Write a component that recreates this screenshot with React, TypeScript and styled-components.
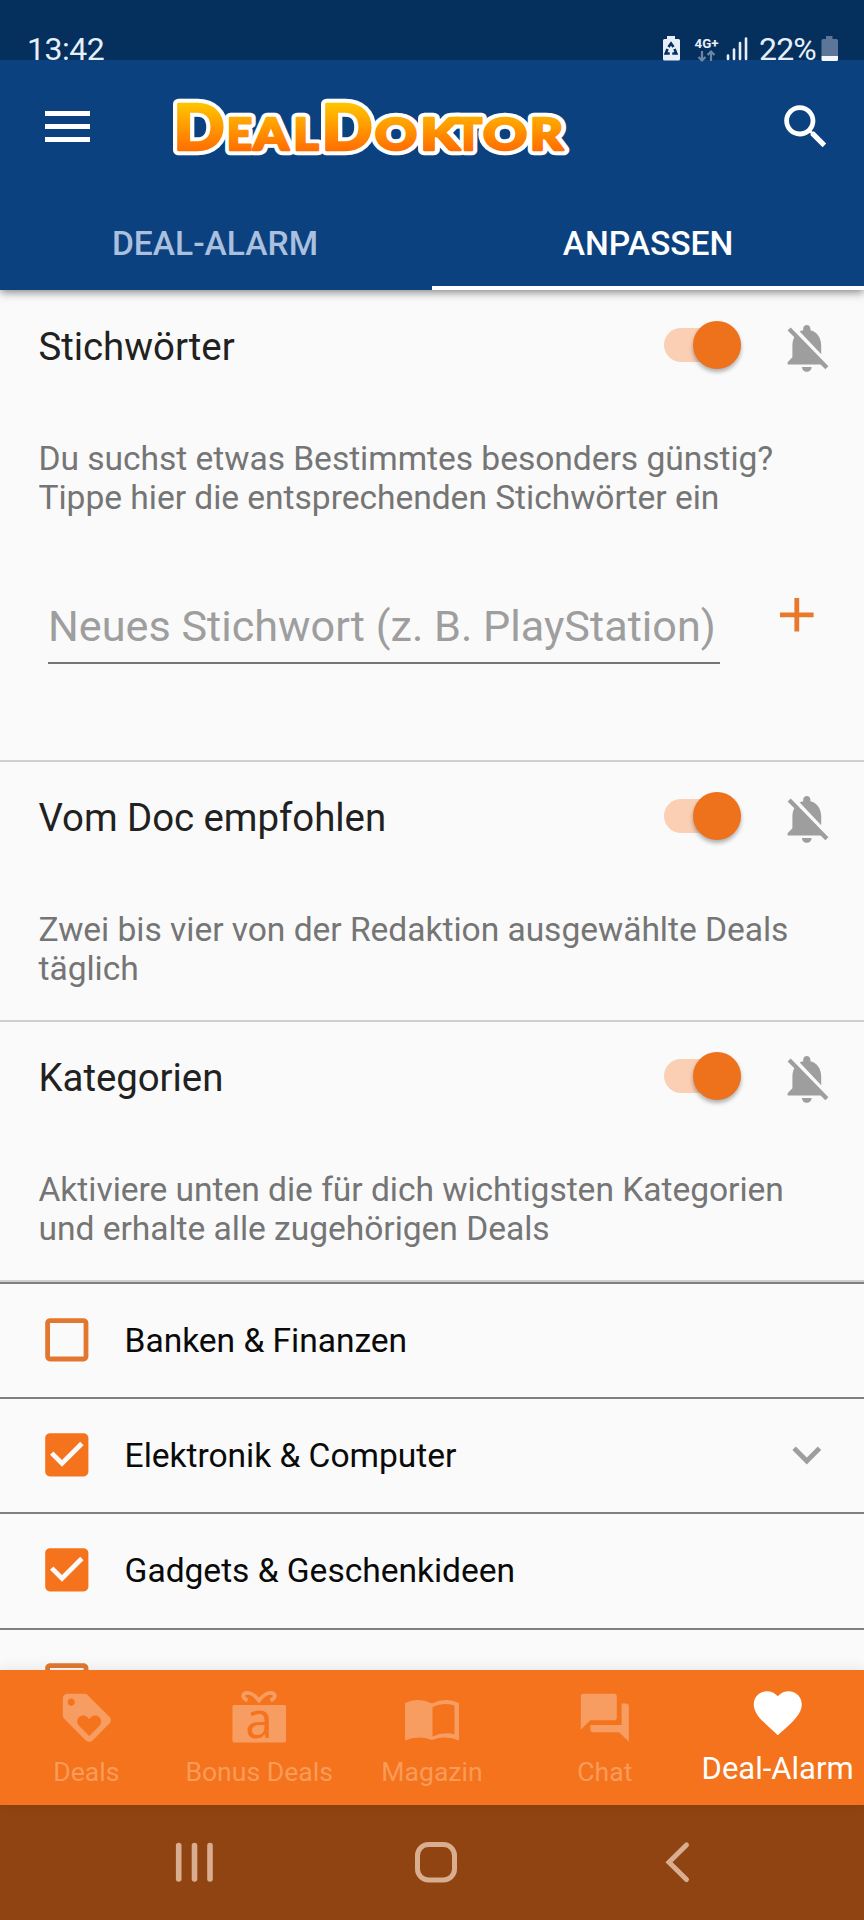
import React from "react";
import styled, { createGlobalStyle } from "styled-components";

const GlobalStyle = createGlobalStyle`
  body { margin: 0; background: #fafafa; }
  * { box-sizing: border-box; }
`;

const Screen = styled.div`
  width: 864px;
  height: 1920px;
  display: flex;
  flex-direction: column;
  overflow: hidden;
  background: #fafafa;
  font-family: Roboto, "Liberation Sans", sans-serif;
`;

const StatusBar = styled.div`
  height: 60px;
  flex: none;
  display: flex;
  align-items: flex-start;
  padding: 31px 26px 0 27px;
  background: #052f5d;
  color: #e6eff9;
  font-size: 32px;
  line-height: 37px;
  z-index: 3;
`;
const Clock = styled.span`
  flex: 1;
  letter-spacing: -0.5px;
`;
const StatusIcons = styled.svg`
  flex: none;
  display: block;
  overflow: visible;
  margin-top: 3px;
`;
const Percent = styled.span`
  margin-left: 9px;
  margin-right: 5px;
  letter-spacing: -0.8px;
`;

const Header = styled.header`
  flex: none;
  height: 230px;
  display: flex;
  flex-direction: column;
  background: #0c417f;
  box-shadow: 0 2px 9px rgba(0, 0, 0, 0.5);
  z-index: 2;
`;
const TitleBar = styled.div`
  height: 133px;
  display: flex;
  align-items: center;
  padding: 0 29px 0 45px;
`;
const MenuButton = styled.div`
  width: 45px;
  height: 31px;
  display: flex;
  flex-direction: column;
  justify-content: space-between;
  span { height: 5px; background: #fff; }
`;
const Logo = styled.svg`
  display: block;
  margin-left: 69px;
  margin-right: auto;
  margin-bottom: 1px;
`;
const Tabs = styled.div`
  flex: 1;
  display: flex;
`;
const Tab = styled.div<{ $active?: boolean }>`
  width: 50%;
  text-align: center;
  padding-top: 31px;
  padding-right: ${(p) => (p.$active ? 0 : 2)}px;
  font-size: 33.6px;
  line-height: 40px;
  font-weight: 500;
  color: ${(p) => (p.$active ? "#fff" : "#aac0de")};
  border-bottom: ${(p) => (p.$active ? "4px solid #fff" : "0")};
`;

const Content = styled.main`
  flex: 1;
  min-height: 0;
  overflow: hidden;
  padding-top: 1px;
`;
const Section = styled.section<{ $height: number }>`
  height: ${(p) => p.$height}px;
  border-bottom: 2.5px solid #cfcfcf;
  padding: 26px 28px 0 38.5px;
`;
const SectionHead = styled.div`
  display: flex;
  align-items: center;
  height: 58px;
`;
const SectionTitle = styled.h2`
  flex: 1;
  margin: 0;
  padding-top: 2px;
  font-size: 38.4px;
  line-height: 46px;
  font-weight: 400;
  letter-spacing: -0.04px;
  color: #212121;
`;
const Switch = styled.div`
  width: 77px;
  height: 34px;
  border-radius: 17px;
  background: #facfb4;
  display: flex;
  align-items: center;
  justify-content: flex-end;
  margin: 0 37.5px 2px 0;
`;
const Thumb = styled.div`
  flex: none;
  width: 48px;
  height: 48px;
  border-radius: 50%;
  background: #ee711c;
  box-shadow: 0 3px 4px rgba(0, 0, 0, 0.3);
`;
const BellSlot = styled.div`
  padding-top: 4px;
`;
const Description = styled.p`
  margin: 64px 0 0;
  font-size: 33.6px;
  line-height: 39.3px;
  letter-spacing: -0.04px;
  color: #757575;
  white-space: pre-line;
`;
const InputRow = styled.div`
  display: flex;
  align-items: flex-start;
  margin-top: 68px;
`;
const KeywordField = styled.div`
  width: 672px;
  height: 72px;
  margin: 6px 48px 0 9.5px;
  border-bottom: 2.5px solid #757575;
  font-size: 43.2px;
  line-height: 50px;
  padding-top: 10px;
  color: #9e9e9e;
  white-space: nowrap;
`;
const Glyph = styled.svg`
  display: block;
  flex: none;
`;

const CategoryList = styled.div`
  border-top: 2.5px solid #808080;
`;
const CategoryRow = styled.div`
  height: 115.2px;
  display: flex;
  align-items: center;
  padding: 0 28.5px 2px 38px;
  border-bottom: 2.5px solid #808080;
`;
const CategoryName = styled.span`
  flex: 1;
  margin-left: 29px;
  padding-top: 2px;
  font-size: 33.6px;
  line-height: 40px;
  letter-spacing: -0.04px;
  color: #0a0a0a;
`;

const BottomNav = styled.nav`
  flex: none;
  height: 135px;
  display: flex;
  background: #f4731c;
  box-shadow: 0 -2px 14px rgba(0, 0, 0, 0.08);
  z-index: 2;
`;
const NavItem = styled.div<{ $active?: boolean }>`
  flex: 1;
  display: flex;
  flex-direction: column;
  align-items: center;
  padding-top: ${(p) => (p.$active ? 14 : 19)}px;
  color: ${(p) => (p.$active ? "#fff" : "#f89d62")};
`;
const NavLabel = styled.span<{ $active?: boolean }>`
  font-size: ${(p) => (p.$active ? 31 : 26.6)}px;
  line-height: 36px;
  margin-top: ${(p) => (p.$active ? 9 : 7)}px;
  white-space: nowrap;
  color: ${(p) => (p.$active ? "#fff" : "#f99b59")};
`;
const SystemNav = styled.div`
  flex: none;
  height: 115px;
  display: flex;
  align-items: center;
  background: #8f4411;
`;

const PATHS = {
  search:
    "M15.5 14h-.79l-.28-.27C15.41 12.59 16 11.11 16 9.5 16 5.91 13.09 3 9.5 3S3 5.91 3 9.5 5.91 16 9.5 16c1.61 0 3.09-.59 4.23-1.57l.27.28v.79l5 4.99L20.49 19l-4.99-5zm-6 0C7.01 14 5 11.99 5 9.5S7.01 5 9.5 5 14 7.01 14 9.5 11.99 14 9.5 14z",
  bellOff:
    "M20 18.69L7.84 6.14 5.27 3.49 4 4.76l2.8 2.8v.01c-.52.99-.8 2.16-.8 3.42v5l-2 2v1h13.73l2 2L21 19.72l-1-1.03zM12 22c1.11 0 2-.89 2-2h-4c0 1.11.89 2 2 2zm6-7.32V11c0-3.08-1.64-5.64-4.5-6.32V4c0-.83-.67-1.5-1.5-1.5s-1.5.67-1.5 1.5v.68c-.15.03-.29.08-.42.12-.1.03-.2.07-.3.11h-.01c-.01 0-.01 0-.02.01-.23.09-.46.2-.68.31 0 0-.01 0-.01.01L18 14.68z",
  add: "M19 13h-6v6h-2v-6H5v-2h6V5h2v6h6v2z",
  checked:
    "M19 3H5c-1.11 0-2 .9-2 2v14c0 1.1.89 2 2 2h14c1.11 0 2-.9 2-2V5c0-1.1-.89-2-2-2zm-9 14l-5-5 1.41-1.41L10 14.17l7.59-7.59L19 8l-9 9z",
  unchecked:
    "M19 5v14H5V5h14m0-2H5c-1.1 0-2 .9-2 2v14c0 1.1.9 2 2 2h14c1.1 0 2-.9 2-2V5c0-1.1-.9-2-2-2z",
  expand: "M16.59 8.59L12 13.17 7.41 8.59 6 10l6 6 6-6z",
  loyalty:
    "M21.41 11.58l-9-9C12.05 2.22 11.55 2 11 2H4c-1.1 0-2 .9-2 2v7c0 .55.22 1.05.59 1.42l9 9c.36.36.86.58 1.41.58.55 0 1.05-.22 1.41-.59l7-7c.37-.36.59-.86.59-1.41 0-.55-.23-1.06-.59-1.42zM5.5 7C4.67 7 4 6.33 4 5.5S4.67 4 5.5 4 7 4.67 7 5.5 6.33 7 5.5 7zm11.77 8.27L13 19.54l-4.27-4.27C8.28 14.81 8 14.19 8 13.5c0-1.38 1.12-2.5 2.5-2.5.69 0 1.32.28 1.77.74l.73.72.73-.73c.45-.45 1.08-.73 1.77-.73 1.38 0 2.5 1.12 2.5 2.5 0 .69-.28 1.32-.73 1.77z",
  forum:
    "M21 6h-2v9H6v2c0 .55.45 1 1 1h11l4 4V7c0-.55-.45-1-1-1zm-4 6V3c0-.55-.45-1-1-1H3c-.55 0-1 .45-1 1v14l4-4h10c.55 0 1-.45 1-1z",
  heart:
    "M12 21.35l-1.45-1.32C5.4 15.36 2 12.28 2 8.5 2 5.42 4.42 3 7.5 3c1.74 0 3.41.81 4.5 2.09C13.09 3.81 14.76 3 16.5 3 19.58 3 22 5.42 22 8.5c0 3.78-3.4 6.86-8.55 11.54L12 21.35z",
};

function Icon({ name, color = "currentColor", size = 57.6 }: { name: keyof typeof PATHS; color?: string; size?: number }) {
  return (
    <Glyph width={size} height={size} viewBox="0 0 24 24">
      <path d={PATHS[name]} fill={color} />
    </Glyph>
  );
}

// letter, left edge, advance width, font size
const LOGO_LETTERS: [string, number, number, number][] = [
  ["D", 14.5, 51, 63],
  ["E", 68, 25, 44],
  ["A", 94.5, 35, 44],
  ["L", 134.5, 25, 44],
  ["D", 162.5, 51, 63],
  ["O", 216, 42, 44],
  ["K", 261.5, 39, 44],
  ["T", 296, 27, 44],
  ["O", 324, 44, 44],
  ["R", 371, 33, 44],
];

function LogoMark() {
  const row = (props: React.SVGProps<SVGGElement>) => (
    <g {...props}>
      {LOGO_LETTERS.map(([ch, x, w, size], i) => (
        <text key={i} x={x} y={64} fontSize={size} textLength={w} lengthAdjust="spacingAndGlyphs">
          {ch}
        </text>
      ))}
    </g>
  );
  return (
    <Logo width="420" height="80" viewBox="0 0 420 80" fontFamily="Lato, sans-serif" fontWeight="900" strokeLinejoin="round">
      <defs>
        <linearGradient id="gold" gradientUnits="userSpaceOnUse" x1="0" y1="18" x2="0" y2="64">
          <stop offset="0" stopColor="#ffc400" />
          <stop offset="1" stopColor="#ff6f00" />
        </linearGradient>
      </defs>
      {row({ fill: "#fff", stroke: "#fff", strokeWidth: 10.5 })}
      {row({ fill: "url(#gold)", stroke: "url(#gold)", strokeWidth: 2.6 })}
    </Logo>
  );
}

function SignalIcons() {
  return (
    <StatusIcons width="88" height="32" viewBox="662 34 88 32">
      <path d="M667 36h8v3h3.5q1.500 0 1.500 1.500v18.500q0 1.500-1.500 1.500h-14q-1.500 0-1.500-1.500v-18.500q0-1.500 1.500-1.500h2.500z" fill="#e6eff9" />
      <g fill="none" stroke="#052f5d" strokeWidth="2.600">
        <path d="M668.500 47l2.500-3.500 2.500 3.500M667.500 49l-1.800 4.500h4M674.500 49l1.800 4.500h-4" />
      </g>
      <text x="694.500" y="47.500" fontSize="13.500" fontWeight="700" fill="#e6eff9" textLength="24" lengthAdjust="spacingAndGlyphs">4G+</text>
      <path d="M702 51v9M698.500 57l3.500 3.500 3.500-3.500M711 61v-9M707.500 55l3.500-3.500 3.500 3.500" fill="none" stroke="#6b86a6" strokeWidth="2.200" />
      <path d="M728 55.500v3.500M734 49.500v9.500M740 43v16M746 38.500v20.500" stroke="#e6eff9" strokeWidth="2.600" strokeLinecap="round" />
    </StatusIcons>
  );
}

function BatteryIcon() {
  return (
    <StatusIcons width="17" height="32" viewBox="821 34 17 32">
      <path d="M826 36h6.500v3h4q1.500 0 1.500 1.500v15.500h-16.500v-15.500q0-1.500 1.500-1.500h3z" fill="#5b7698" />
      <path d="M821.500 56h16.500v3.500q0 1.500-1.500 1.500h-13.500q-1.500 0-1.500-1.500z" fill="#f4f8fd" />
    </StatusIcons>
  );
}

function GiftIcon() {
  return (
    <Glyph width="58" height="57.6" viewBox="0 0 58 57.6" overflow="visible">
      <rect x="2.500" y="16" width="53.500" height="37.500" rx="1.500" fill="currentColor" />
      <path d="M17.500 11.500C10.500 8 13 3 19 4C24 5 26.500 8.500 29 11.500C31.500 8.500 34 5 39 4C45 3 47.500 8 40.500 11.500" fill="none" stroke="currentColor" strokeWidth="3.800" />
      <text x="29" y="48.700" textAnchor="middle" fontFamily="Noto Sans, sans-serif" fontSize="49" fill="#f4731c">a</text>
    </Glyph>
  );
}

function BookIcon() {
  return (
    <Glyph width="58" height="57.6" viewBox="0 0 58 57.6">
      <path d="M2 14Q15 8 29 14.500Q43 8 56 14V51.500Q43 46 29 51Q15 46 2 51.500zM29.500 18V47.500Q41 42.500 51.500 45.500V16.500Q40 13 29.500 18z" fill="currentColor" fillRule="evenodd" />
    </Glyph>
  );
}

function AlarmSection({ title, text, height, children }: { title: string; text: string; height: number; children?: React.ReactNode }) {
  return (
    <Section $height={height}>
      <SectionHead>
        <SectionTitle>{title}</SectionTitle>
        <Switch><Thumb /></Switch>
        <BellSlot><Icon name="bellOff" color="#9e9e9e" /></BellSlot>
      </SectionHead>
      <Description>{text}</Description>
      {children}
    </Section>
  );
}

function Category({ name, checked, expandable }: { name: string; checked?: boolean; expandable?: boolean }) {
  return (
    <CategoryRow>
      <Icon name={checked ? "checked" : "unchecked"} color={checked ? "#f4731c" : "#e2782f"} />
      <CategoryName>{name}</CategoryName>
      {expandable && <Icon name="expand" color="#9e9e9e" />}
    </CategoryRow>
  );
}

export default function App() {
  return (
    <Screen>
      <GlobalStyle />
      <StatusBar>
        <Clock>13:42</Clock>
        <SignalIcons />
        <Percent>22%</Percent>
        <BatteryIcon />
      </StatusBar>
      <Header>
        <TitleBar>
          <MenuButton><span /><span /><span /></MenuButton>
          <LogoMark />
          <Icon name="search" color="#fff" />
        </TitleBar>
        <Tabs>
          <Tab>DEAL-ALARM</Tab>
          <Tab $active>ANPASSEN</Tab>
        </Tabs>
      </Header>
      <Content>
        <AlarmSection
          title="Stichwörter"
          height={471}
          text={"Du suchst etwas Bestimmtes besonders günstig?\nTippe hier die entsprechenden Stichwörter ein"}
        >
          <InputRow>
            <KeywordField>Neues Stichwort (z. B. PlayStation)</KeywordField>
            <Icon name="add" color="#e8782a" />
          </InputRow>
        </AlarmSection>
        <AlarmSection
          title="Vom Doc empfohlen"
          height={260}
          text={"Zwei bis vier von der Redaktion ausgewählte Deals\ntäglich"}
        />
        <AlarmSection
          title="Kategorien"
          height={260}
          text={"Aktiviere unten die für dich wichtigsten Kategorien\nund erhalte alle zugehörigen Deals"}
        />
        <CategoryList>
          <Category name="Banken & Finanzen" />
          <Category name="Elektronik & Computer" checked expandable />
          <Category name="Gadgets & Geschenkideen" checked />
          <Category name="" />
        </CategoryList>
      </Content>
      <BottomNav>
        <NavItem><Icon name="loyalty" /><NavLabel>Deals</NavLabel></NavItem>
        <NavItem><GiftIcon /><NavLabel>Bonus Deals</NavLabel></NavItem>
        <NavItem><BookIcon /><NavLabel>Magazin</NavLabel></NavItem>
        <NavItem><Icon name="forum" /><NavLabel>Chat</NavLabel></NavItem>
        <NavItem $active><Icon name="heart" /><NavLabel $active>Deal-Alarm</NavLabel></NavItem>
      </BottomNav>
      <SystemNav>
        <Glyph width="864" height="115" viewBox="0 1805 864 115" fill="none" stroke="#d9ad90" strokeWidth="5.600" strokeLinecap="round">
          <path d="M178.700 1845.500v33.500M194.500 1845.500v33.500M210 1845.500v33.500" />
          <rect x="417.500" y="1844.500" width="37" height="35.500" rx="11" strokeWidth="5" />
          <path d="M686.500 1845l-17.500 17.300 17.500 17.200" strokeWidth="5" />
        </Glyph>
      </SystemNav>
    </Screen>
  );
}
